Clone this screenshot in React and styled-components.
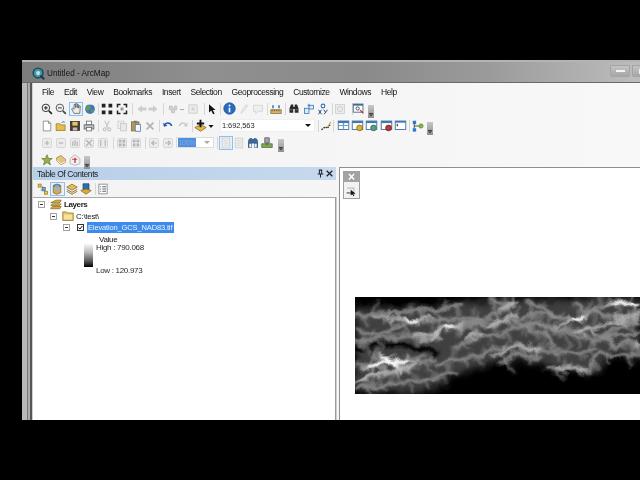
import React from "react";
import styled, { createGlobalStyle } from "styled-components";

const GlobalStyle = createGlobalStyle`
  html, body { margin: 0; padding: 0; background: #000; }
  body { width: 640px; height: 480px; overflow: hidden; font-family: "Liberation Sans", Arial, sans-serif; }
`;

const Page = styled.div`
  width: 640px;
  height: 480px;
  padding: 60px 0 60px 22px;
  box-sizing: border-box;
  overflow: hidden;
  background: #000;
`;

const Window = styled.div`
  width: 618px;
  height: 360px;
  display: flex;
  flex-direction: column;
  overflow: hidden;
  filter: blur(0.35px);
`;

const TitleBar = styled.div`
  height: 23px;
  flex: none;
  display: flex;
  align-items: center;
  box-sizing: border-box;
  padding: 2px 0 0 10px;
  gap: 2px;
  border-top: 2px solid #b4b4b4;
  border-bottom: 1px solid #6a6a6a;
  background: linear-gradient(90deg, #7c7c7c 0%, #8f8f8f 30%, #8a8a8a 55%, #9a9a9a 75%, #bdbdbd 100%);
`;

const TitleText = styled.span`
  font-size: 8.2px;
  color: #141414;
`;

const WinButtons = styled.div`
  margin-left: auto;
  margin-right: -12px;
  display: flex;
  gap: 2px;
  align-self: flex-start;
  margin-top: 1px;
`;

const WinButton = styled.div`
  width: 20px;
  height: 12px;
  display: flex;
  align-items: center;
  justify-content: center;
  background: linear-gradient(#c4c4c4, #a6a6a6);
  border: 1px solid #a4a4a4;
  box-sizing: border-box;
  border-radius: 0 0 2px 2px;
`;

const WinGlyph = styled.div`
  width: ${(p) => (p.$max ? "7px" : "9px")};
  height: ${(p) => (p.$max ? "5px" : "2px")};
  box-sizing: border-box;
  background: ${(p) => (p.$max ? "transparent" : "#f4f4f4")};
  border: ${(p) => (p.$max ? "1px solid #f0f0f0" : "none")};
`;

const Body = styled.div`
  flex: 1;
  min-height: 0;
  display: flex;
`;

const SideChrome = styled.div`
  width: 11px;
  flex: none;
  background: linear-gradient(90deg, #b9b9b9 0 5px, #777 5px 6px, #adadad 6px 8px, #565656 8px 10px, #cfcfcf 10px 11px);
`;

const Client = styled.div`
  flex: 1;
  min-width: 0;
  display: flex;
  flex-direction: column;
  background: linear-gradient(90deg, #f3f3f3, #f8f8f8);
`;

const MenuBar = styled.div`
  height: 17px;
  flex: none;
  display: flex;
  align-items: center;
  gap: 9.9px;
  padding-left: 9px;
  font-size: 8.5px;
  letter-spacing: -0.42px;
  color: #141414;
`;

const ToolRow = styled.div`
  height: 17px;
  flex: none;
  display: flex;
  align-items: center;
`;

const Slot = styled.div`
  flex: none;
  width: ${(p) => p.$w || 14}px;
  height: 14px;
  margin-left: ${(p) => p.$ml || 0}px;
  display: flex;
  align-items: center;
  justify-content: center;
  box-sizing: border-box;
  border: ${(p) => (p.$on ? "1px solid #8fc0ec" : "none")};
  background: ${(p) => (p.$on ? "#e6f1fb" : "transparent")};
  svg { display: block; flex: none; }
`;

const Sep = styled.div`
  flex: none;
  width: 1px;
  height: 12px;
  margin-left: ${(p) => p.$ml || 0}px;
  background: #d6d6d6;
`;

const Grip = styled.div`
  flex: none;
  width: 6px;
  height: 13px;
  margin-left: ${(p) => p.$ml || 0}px;
  margin-top: 6px;
  background: linear-gradient(#c8c8c8, #8f8f8f);
  position: relative;
  &::after {
    content: "";
    position: absolute;
    left: 1px;
    bottom: 2px;
    width: 4px;
    height: 3px;
    background: #222;
    clip-path: polygon(0 0, 100% 0, 100% 25%, 0 25%, 0 50%, 100% 50%, 50% 100%, 0 50%);
  }
`;

const Combo = styled.div`
  flex: none;
  width: ${(p) => p.$w}px;
  height: ${(p) => p.$h}px;
  margin-left: ${(p) => p.$ml || 0}px;
  box-sizing: border-box;
  display: flex;
  align-items: center;
  background: #fff;
  border: 1px solid ${(p) => (p.$off ? "#dcdcdc" : "#efefef")};
  font-size: 7.5px;
  letter-spacing: -0.1px;
  color: #2a2a2a;
  padding-left: 1px;
`;

const ComboArrow = styled.div`
  margin-left: auto;
  margin-right: 3px;
  width: 0;
  height: 0;
  border-left: 3px solid transparent;
  border-right: 3px solid transparent;
  border-top: 3px solid ${(p) => (p.$off ? "#aaa" : "#111")};
`;

const ComboValue = styled.span`
  background: #4f8fe0;
  color: #7ea9dd;
  width: 18px;
  height: 9px;
  font-size: 7px;
  line-height: 9px;
  text-align: center;
`;

const Dock = styled.div`
  flex: 1;
  min-height: 0;
  display: flex;
  gap: 3px;
  margin-top: -1px;
`;

const TocPanel = styled.div`
  width: 303px;
  flex: none;
  display: flex;
  flex-direction: column;
`;

const TocHeader = styled.div`
  height: 13px;
  flex: none;
  display: flex;
  align-items: center;
  padding: 0 2px 0 4px;
  background: linear-gradient(90deg, #b8cfe8, #c6d9ee);
  font-size: 8.5px;
  letter-spacing: -0.42px;
  color: #1c1c1c;
`;

const TocTitle = styled.span`
  margin-right: auto;
`;

const Tree = styled.div`
  flex: 1;
  background: #fff;
  border-top: 1px solid #a9a9a9;
  border-right: 1px solid #9a9a9a;
  box-shadow: 1px 0 0 #d0d0d0;
  padding-top: 1px;
  font-size: 8px;
  letter-spacing: -0.3px;
  color: #1c1c1c;
`;

const TreeRow = styled.div`
  height: 11.5px;
  display: flex;
  align-items: center;
  gap: ${(p) => p.$gap || 0}px;
  padding-left: ${(p) => p.$indent}px;
`;

const Expander = styled.div`
  width: 7px;
  height: 7px;
  flex: none;
  box-sizing: border-box;
  border: 1px solid #a4a4a4;
  background: #fff;
  position: relative;
  margin-right: ${(p) => p.$mr}px;
  &::after {
    content: "";
    position: absolute;
    left: 1px;
    top: 2px;
    width: 3px;
    height: 1px;
    background: #333;
  }
`;

const Check = styled.div`
  width: 7px;
  height: 7px;
  flex: none;
  box-sizing: border-box;
  border: 1px solid #333;
  margin-right: 3px;
  background: #fff;
  display: flex;
  align-items: center;
  justify-content: center;
`;

const LayerName = styled.span`
  background: #3d8ceb;
  color: #eaf3ff;
  height: 11px;
  line-height: 11px;
  padding: 0 1px;
  width: 85px;
  font-size: 7.5px;
  letter-spacing: -0.14px;
  white-space: nowrap;
`;

const Bold = styled.b`
  font-weight: bold;
  letter-spacing: -0.4px;
`;

const Legend = styled.div`
  display: flex;
  padding-left: 51px;
  gap: 3px;
  margin-top: -1px;
`;

const Ramp = styled.div`
  width: 9px;
  height: 23px;
  flex: none;
  background: linear-gradient(#f7f7f7, #bbb 35%, #555 75%, #000);
`;

const LegendLabels = styled.div`
  height: 32px;
  margin-top: -1px;
  display: flex;
  flex-direction: column;
  justify-content: space-between;
  color: #2a2a2a;
`;

const MapFrame = styled.div`
  flex: 1;
  min-width: 0;
  background: #fff;
  border-top: 1px solid #8f8f8f;
  border-left: 1px solid #8f8f8f;
  position: relative;
  overflow: hidden;
`;

const Raster = styled.svg`
  display: block;
  margin: 129px 0 0 15px;
`;

const FloatBox = styled.div`
  position: absolute;
  left: 3px;
  top: 3px;
  width: 17px;
  height: 28px;
  box-sizing: border-box;
  border: 1px solid #a0a0a0;
  background: #f2f2f2;
`;

const FloatHead = styled.div`
  height: 10px;
  background: #a3a3a3;
  display: flex;
  align-items: center;
  justify-content: center;
  color: #fff;
  font-size: 12px;
  font-weight: bold;
  line-height: 10px;
`;

const FloatBody = styled.div`
  height: 16px;
  display: flex;
  align-items: center;
  justify-content: center;
`;

const I = ({ children, s = 12 }) => (
  <svg width={s} height={s} viewBox="0 0 16 16">{children}</svg>
);

const grayGrid = (d) => (
  <I>
    <rect x="2" y="2" width="12" height="12" rx="1.5" fill="#ececec" stroke="#cfcfcf" />
    <path d={d} stroke="#b4b4b4" strokeWidth="1.6" fill="none" />
  </I>
);

const winIcon = (accent, accent2) => (
  <I s={13}>
    <rect x="1.5" y="2.5" width="13" height="10.5" fill="#fff" stroke="#2f5f93" />
    <rect x="1.5" y="2.5" width="13" height="2.5" fill="#3b78b8" />
    <circle cx="10.5" cy="11" r="3.5" fill={accent} stroke={accent2} />
  </I>
);

const icons = {
  zoomIn: (
    <I>
      <circle cx="6.5" cy="6.5" r="5" fill="#eef3f8" stroke="#333" strokeWidth="1.3" />
      <path d="M4 6.5h5M6.5 4v5" stroke="#111" strokeWidth="1.2" />
      <path d="M10.5 10.5l4 4" stroke="#222" strokeWidth="2.2" />
    </I>
  ),
  zoomOut: (
    <I>
      <circle cx="6.5" cy="6.5" r="5" fill="#eef3f8" stroke="#555" strokeWidth="1.3" />
      <path d="M4 6.5h5" stroke="#222" strokeWidth="1.2" />
      <path d="M10.5 10.5l4 4" stroke="#444" strokeWidth="2.2" />
    </I>
  ),
  hand: (
    <I s={13}>
      <path d="M5 14L2 8.5l1.2-1L5 9V3.2l1.3-.4L7 7V2l1.4-.2L9 7V2.8l1.3.2.3 4.6.9-3 1.2.5L12 14z" fill="#ececec" stroke="#555" strokeWidth="0.9" />
    </I>
  ),
  globe: (
    <I>
      <circle cx="8" cy="8" r="6.5" fill="#3f78b8" />
      <path d="M4 4c3-2 5 0 5 2s-3 2-3 4-3 0-3-2 0-3 1-4zM10 9c2-1 3 0 3 1s-2 3-3 2 0-2 0-3z" fill="#6f9a4a" />
      <path d="M5 2.6c2-1 4-1 6 0" stroke="#cfe2f5" fill="none" />
    </I>
  ),
  fixedIn: (
    <I>
      <path d="M1 1h5v5H1zM10 1h5v5h-5zM1 10h5v5H1zM10 10h5v5h-5z" fill="#222" />
    </I>
  ),
  fixedOut: (
    <I>
      <path d="M1 1h5v2H3v3H1zM10 1h5v5h-2V3h-3zM1 10h2v3h3v2H1zM13 10h2v5h-5v-2h3z" fill="#222" />
      <path d="M6 6h4v4H6z" fill="#999" />
    </I>
  ),
  back: (<I><path d="M2 8l6-5v3h6v4H8v3z" fill="#cdcdcd" /></I>),
  forward: (<I><path d="M14 8L8 3v3H2v4h6v3z" fill="#cdcdcd" /></I>),
  selGray: (<I><path d="M3 4h4v3h3V4h3v5h-3v4H6V9H3z" fill="#d2d2d2" stroke="#bbb" /></I>),
  caretGray: (<I s={8}><path d="M4 9h8" stroke="#aaa" strokeWidth="2" /></I>),
  clearGray: (<I><rect x="2.5" y="2.5" width="11" height="11" fill="#ededed" stroke="#c4c4c4" /><path d="M6 6h4v4H6z" fill="#d2d2d2" /></I>),
  arrow: (<I><path d="M4 1.5v11l3-2.5 2.5 5 2-1-2.5-4.8h3.7z" fill="#111" /></I>),
  info: (
    <I s={13}>
      <circle cx="8" cy="8" r="7" fill="#2c6cc0" stroke="#1c4f98" />
      <path d="M8 3.5v2M8 7v5.5" stroke="#fff" strokeWidth="2" />
    </I>
  ),
  pencilGray: (<I><path d="M4 14l1-4 6-8 2 1.5-6 8z" fill="#e6e6e6" stroke="#d4d4d4" /></I>),
  noteGray: (<I><path d="M2 3h12v8H8l-3 3v-3H2z" fill="#efefef" stroke="#cdcdcd" /></I>),
  measure: (
    <I>
      <path d="M1 9h14v5H1z" fill="#d9b26a" stroke="#8a6a30" />
      <path d="M3 9v2M6 9v2M9 9v2M12 9v2" stroke="#5a4520" />
      <path d="M4 3v4M12 3v4" stroke="#2a70c0" strokeWidth="2" />
    </I>
  ),
  binoculars: (
    <I>
      <path d="M2 13V7l2-5h3v3h2V2h3l2 5v6H9V8H7v5z" fill="#2a2a2a" />
      <path d="M3 9h3M10 9h3" stroke="#888" />
    </I>
  ),
  gotoXY: (
    <I>
      <rect x="2" y="7" width="6" height="7" fill="#dbe9f7" stroke="#2f6fb5" />
      <rect x="8" y="3" width="6" height="5" fill="#dbe9f7" stroke="#2f6fb5" />
      <path d="M6 3h3M8 1v4" stroke="#2f6fb5" />
    </I>
  ),
  xy: (
    <I>
      <circle cx="8" cy="4" r="2.5" fill="none" stroke="#2f6fb5" strokeWidth="1.4" />
      <path d="M2 9l4 6M6 9l-4 6M9 9l2.5 3.5M14 9l-4.5 6" stroke="#1d4d8a" strokeWidth="1.3" />
    </I>
  ),
  clockGray: (<I><rect x="2" y="2" width="12" height="12" fill="#ececec" stroke="#cbcbcb" /><circle cx="8" cy="8" r="3.5" fill="none" stroke="#c6c6c6" /></I>),
  viewer: (
    <I s={13}>
      <rect x="1.5" y="2.5" width="12" height="10" fill="#fff" stroke="#33587f" />
      <rect x="1.5" y="2.5" width="12" height="2" fill="#46688c" />
      <circle cx="7" cy="8" r="2" fill="none" stroke="#333" />
      <path d="M10 10l4 4" stroke="#a33" strokeWidth="1.5" />
    </I>
  ),
  newDoc: (<I><path d="M3 1.5h7l3 3v10H3z" fill="#fff" stroke="#777" /><path d="M10 1.5v3h3" fill="none" stroke="#777" /></I>),
  open: (
    <I>
      <path d="M1.5 5h5l1 1.5h6V14h-12z" fill="#e8bc4c" stroke="#9c7a25" />
      <path d="M9 4c1-2 3-2 4-1" stroke="#2a70c0" strokeWidth="1.3" fill="none" />
    </I>
  ),
  save: (
    <I>
      <rect x="2" y="2" width="12" height="12" fill="#4a4030" stroke="#2d2618" />
      <rect x="4.5" y="2.5" width="7" height="5" fill="#e5c568" />
      <rect x="5" y="10" width="6" height="4" fill="#bbb" />
    </I>
  ),
  print: (
    <I>
      <rect x="4.5" y="1.5" width="7" height="5" fill="#fff" stroke="#666" />
      <rect x="1.5" y="6.5" width="13" height="5.5" fill="#bfc5cc" stroke="#555" />
      <rect x="4.5" y="10" width="7" height="4.5" fill="#fff" stroke="#666" />
    </I>
  ),
  cut: (<I><path d="M5 1l4 9M11 1L7 10" stroke="#c6c6c6" strokeWidth="1.5" /><circle cx="5" cy="12.5" r="2" fill="none" stroke="#c2c2c2" strokeWidth="1.4" /><circle cx="11" cy="12.5" r="2" fill="none" stroke="#c2c2c2" strokeWidth="1.4" /></I>),
  copy: (<I><rect x="2.5" y="1.5" width="8" height="10" fill="#eee" stroke="#cbcbcb" /><rect x="6" y="4.5" width="8" height="10" fill="#e8e8e8" stroke="#c4c4c4" /></I>),
  paste: (
    <I>
      <rect x="2" y="2.5" width="10" height="12" fill="#b89558" stroke="#7a6030" />
      <rect x="5" y="1" width="4" height="3" fill="#777" />
      <rect x="7" y="6" width="7" height="9" fill="#f4f7fb" stroke="#4a78a8" />
    </I>
  ),
  del: (<I><path d="M3.5 3.5l9 9M12.5 3.5l-9 9" stroke="#b4b4b4" strokeWidth="2.4" /></I>),
  undo: (<I><path d="M3 7c2-4 8-4 10 1" fill="none" stroke="#1f58a8" strokeWidth="2" /><path d="M1.5 3.5L2.5 9l5-1.5z" fill="#1f58a8" /></I>),
  redo: (<I><path d="M13 7c-2-4-8-4-10 1" fill="none" stroke="#cbcbcb" strokeWidth="2" /><path d="M14.5 3.5L13.5 9l-5-1.5z" fill="#cbcbcb" /></I>),
  addData: (
    <I s={13}>
      <path d="M8 7l7 3.5L8 15 1 10.5z" fill="#e5b64a" stroke="#8a6a20" />
      <path d="M8 1v9M3.5 5.5h9" stroke="#111" strokeWidth="2.3" />
    </I>
  ),
  caret: (<I s={8}><path d="M3 6h10l-5 6z" fill="#111" /></I>),
  editor: (
    <I>
      <path d="M2 13l5-4 3 2 4-6" stroke="#222" strokeDasharray="2 1.5" strokeWidth="1.8" fill="none" />
      <path d="M10 8l4-6 1 1-4 6z" fill="#d9a83c" />
    </I>
  ),
  attrTable: (
    <I s={13}>
      <rect x="1.5" y="2.5" width="13" height="10.5" fill="#fff" stroke="#2f5f93" />
      <rect x="1.5" y="2.5" width="13" height="2.5" fill="#3b78b8" />
      <path d="M2 8h12M8 5v8" stroke="#6b9bd0" strokeWidth="1.5" />
    </I>
  ),
  catalog: winIcon("#d9b233", "#8a6d10"),
  search: winIcon("#5aa06a", "#2c6f70"),
  toolbox: winIcon("#b83a33", "#7a1f1a"),
  python: (
    <I s={13}>
      <rect x="1.5" y="2.5" width="13" height="10.5" fill="#fff" stroke="#2f5f93" />
      <rect x="1.5" y="2.5" width="13" height="2" fill="#3b78b8" />
      <path d="M4 6v3" stroke="#111" strokeWidth="1.2" />
    </I>
  ),
  model: (
    <I>
      <rect x="1" y="1" width="4.5" height="4.5" fill="#2f78c8" />
      <rect x="1" y="11" width="4.5" height="4.5" fill="#2f78c8" />
      <circle cx="12" cy="8" r="2.8" fill="#7ebc45" stroke="#4d8420" />
      <path d="M3 5.5v5.5M3 8h6" stroke="#222" />
    </I>
  ),
  gZoomIn: grayGrid("M5 8h6M8 5v6"),
  gZoomOut: grayGrid("M5 8h6"),
  gHand: grayGrid("M5 12V6M8 12V4M11 12V6"),
  gExtent: grayGrid("M4 4l8 8M12 4l-8 8"),
  gPage: grayGrid("M5 4v8M11 4v8"),
  gFixed: grayGrid("M4.5 4.5h2v2h-2zM9.5 4.5h2v2h-2zM4.5 9.5h2v2h-2zM9.5 9.5h2v2h-2z"),
  gBack: grayGrid("M12 8H5M8 5L5 8l3 3"),
  gFwd: grayGrid("M4 8h7M8 5l3 3-3 3"),
  gDoc: (<I><rect x="3" y="1.5" width="10" height="13" fill="#efefef" stroke="#c8c8c8" /><path d="M5 5h6M5 8h6M5 11h6" stroke="#cdcdcd" /></I>),
  focus: (
    <I>
      <path d="M2 14V6c0-5 5-5 6-2 1-3 6-3 6 2v8h-4V8H6v6z" fill="#3a6a9a" stroke="#25496f" />
      <rect x="3" y="9" width="3" height="5" fill="#e6edf4" />
      <rect x="10" y="9" width="3" height="5" fill="#e6edf4" />
    </I>
  ),
  dataDriven: (
    <I>
      <path d="M5 1h6v7H5z" fill="#9aa6ae" stroke="#555" />
      <path d="M1 9h14v5H1z" fill="#7fa55c" stroke="#4f6f30" />
      <path d="M8 8v3" stroke="#333" />
    </I>
  ),
  star: (<I><path d="M8 1l2 5h5l-4 3.2 1.6 5.3L8 11.3l-4.6 3.2L5 9.2 1 6h5z" fill="#96ad52" stroke="#66802f" /></I>),
  book: (<I><path d="M2 5l6-3 6 5v4l-6 3-6-5z" fill="#e3c47e" stroke="#a4843c" /><path d="M2 8l6 5 6-3" fill="none" stroke="#fff" /></I>),
  pin: (
    <I>
      <path d="M8 1l6.5 5v7L8 15l-6.500-2V6z" fill="#f4f0ee" stroke="#b3a7a5" />
      <path d="M8 5v7" stroke="#b02020" strokeWidth="1.5" />
      <path d="M4 7h7" stroke="#b02020" />
    </I>
  ),
  listDrawing: (
    <I>
      <path d="M3 3l5 2-3 5 5 1 3 3" fill="none" stroke="#aaa" />
      <rect x="1.500" y="1.500" width="4" height="4" fill="#e3c45a" stroke="#9a8020" />
      <rect x="7" y="6" width="4" height="4" fill="#7fa8d0" stroke="#3a6a9a" />
      <rect x="10" y="11" width="4" height="4" fill="#e3c45a" stroke="#9a8020" />
    </I>
  ),
  listSource: (
    <I>
      <path d="M3 3h10v10l-5 2-5-2z" fill="#d9a94a" stroke="#8a6a20" />
      <ellipse cx="8" cy="4" rx="4" ry="2.500" fill="#8fa0b0" stroke="#4c5c6c" />
      <rect x="4" y="5" width="8" height="5" fill="#a3b0bc" />
    </I>
  ),
  listVis: (
    <I>
      <path d="M8 1.500l7 4-7 4-7-4z" fill="#e3bc5e" stroke="#8a6a20" />
      <path d="M1 8.500l7 4 7-4" fill="none" stroke="#8a6a20" strokeWidth="1.200" />
      <path d="M1 11l7 4 7-4" fill="none" stroke="#8a6a20" strokeWidth="1.200" />
    </I>
  ),
  listSel: (
    <I>
      <path d="M4 1h8v8H4z" fill="#2a6fa8" stroke="#1d4d78" />
      <path d="M1 10l7-2 7 2-7 5z" fill="#e0a83a" stroke="#8a6a20" />
    </I>
  ),
  options: (
    <I>
      <rect x="2.500" y="1.500" width="11" height="13" fill="#fff" stroke="#777" />
      <path d="M7 5h5M7 8h5M7 11h5" stroke="#333" />
      <path d="M4 5h1.500M4 8h1.500M4 11h1.500" stroke="#2a6fa8" />
    </I>
  ),
  fullExtentTool: (
    <I s={13}>
      <path d="M3 5h8v8" fill="none" stroke="#4a7fb5" strokeDasharray="1.500 1" />
      <path d="M7 7v7l2-1.500 1.500 2.500 1-.6-1.400-2.400H13z" fill="#111" />
      <path d="M2 11h5" stroke="#111" />
    </I>
  ),
  pinTab: (
    <I s={9}>
      <path d="M5 2h6M6 2v6M10 2v6M3 9h10M8 9v6" stroke="#222" strokeWidth="1.800" fill="none" />
    </I>
  ),
  closeTab: (<I s={9}><path d="M3 3l10 10M13 3L3 13" stroke="#222" strokeWidth="2.200" /></I>),
  check: (<I s={7}><path d="M2 8l4 5 8-10" stroke="#111" strokeWidth="3.200" fill="none" /></I>),
  layers: (
    <I s={12}>
      <path d="M1 5l7-3.500h7L13 5z" fill="#d9aa44" stroke="#8a6a20" />
      <path d="M1 8.500l2-2h12l-2 2z" fill="#e3bc5e" stroke="#8a6a20" />
      <path d="M1 12l2-2h12l-2 3H1z" fill="#d9aa44" stroke="#8a6a20" />
    </I>
  ),
  folder: (
    <I s={12}>
      <path d="M1 4V2.500h5L7.500 4H15v10H1z" fill="#e7c65f" stroke="#8f7523" />
      <path d="M2.500 6h11v6.500h-11z" fill="#f5e4a0" />
    </I>
  ),
  logo: (
    <I s={13}>
      <circle cx="7.500" cy="7.500" r="6" fill="#3e9aa8" stroke="#1e4e60" strokeWidth="2" />
      <circle cx="7.500" cy="7.500" r="2.500" fill="#c9dde0" />
      <path d="M10.500 10.500l4.500 4.500" stroke="#153a48" strokeWidth="2.500" />
    </I>
  ),
};

// x = centre of the icon in page pixels, turned into margins so the row stays in flow
const buildRow = (items, start = 33) => {
  let cursor = start;
  return items.map((item, idx) => {
    const { x, kind = "icon", w = kind === "sep" ? 1 : kind === "grip" ? 6 : 14 } = item;
    const ml = x - w / 2 - cursor;
    cursor = x + w / 2;
    if (kind === "sep") return <Sep key={idx} $ml={ml} />;
    if (kind === "grip") return <Grip key={idx} $ml={ml} />;
    if (kind === "combo")
      return (
        <Combo key={idx} $ml={ml} $w={w} $h={item.h} $off={item.off}>
          {item.text}
          {item.value && <ComboValue>{item.value}</ComboValue>}
          <ComboArrow $off={item.off} />
        </Combo>
      );
    return (
      <Slot key={idx} $ml={ml} $w={w} $on={item.on}>
        {icons[item.i]}
      </Slot>
    );
  });
};

const sep = (x) => ({ kind: "sep", x });

const row1 = [
  { i: "zoomIn", x: 47 }, { i: "zoomOut", x: 61 }, { i: "hand", x: 76, on: true }, { i: "globe", x: 90 },
  sep(98), { i: "fixedIn", x: 107 }, { i: "fixedOut", x: 122 }, sep(132),
  { i: "back", x: 142, w: 10 }, { i: "forward", x: 153, w: 10 }, sep(163),
  { i: "selGray", x: 173 }, { i: "caretGray", x: 182, w: 8 }, { i: "clearGray", x: 193 }, sep(204),
  { i: "arrow", x: 212 }, sep(220), { i: "info", x: 229, w: 15 }, { i: "pencilGray", x: 244 }, { i: "noteGray", x: 258 }, sep(267),
  { i: "measure", x: 276 }, sep(285), { i: "binoculars", x: 294 }, { i: "gotoXY", x: 309 }, { i: "xy", x: 323 }, sep(332),
  { i: "clockGray", x: 340 }, sep(352), { i: "viewer", x: 358 }, { kind: "grip", x: 371 },
];

const row2 = [
  { i: "newDoc", x: 47 }, { i: "open", x: 61 }, { i: "save", x: 75 }, { i: "print", x: 89 }, sep(98),
  { i: "cut", x: 107 }, { i: "copy", x: 122 }, { i: "paste", x: 136 }, { i: "del", x: 150 }, sep(159),
  { i: "undo", x: 168 }, { i: "redo", x: 183 }, sep(192), { i: "addData", x: 200, w: 15 }, { i: "caret", x: 211, w: 8 },
  { kind: "combo", x: 267.5, w: 95, h: 13, text: "1:692,563" }, sep(318), { i: "editor", x: 326 }, sep(333),
  { i: "attrTable", x: 343, w: 15 }, { i: "catalog", x: 357, w: 15 }, { i: "search", x: 371, w: 15 }, { i: "toolbox", x: 386, w: 15 }, { i: "python", x: 400, w: 15 }, sep(409),
  { i: "model", x: 418 }, { kind: "grip", x: 430 },
];

const row3 = [
  { i: "gZoomIn", x: 47 }, { i: "gZoomOut", x: 61 }, { i: "gHand", x: 75 }, { i: "gExtent", x: 89 }, { i: "gPage", x: 103 }, sep(113),
  { i: "gFixed", x: 122 }, { i: "gFixed", x: 136 }, sep(145), { i: "gBack", x: 154 }, { i: "gFwd", x: 168 },
  { kind: "combo", x: 195, w: 38, h: 11, value: "100%", off: true }, sep(217),
  { i: "gDoc", x: 226, on: true }, { i: "gDoc", x: 239 }, { i: "focus", x: 253 }, { i: "dataDriven", x: 267 }, { kind: "grip", x: 281 },
];

const row4 = [
  { i: "star", x: 47 }, { i: "book", x: 61 }, { i: "pin", x: 75 }, { kind: "grip", x: 87 },
];

const tocRow = [
  { i: "listDrawing", x: 43 }, { i: "listSource", x: 57, on: true, w: 15 }, { i: "listVis", x: 72 }, { i: "listSel", x: 86 }, sep(95), { i: "options", x: 103 },
];

const menu = ["File", "Edit", "View", "Bookmarks", "Insert", "Selection", "Geoprocessing", "Customize", "Windows", "Help"];

// side branches along a ridge line, so it reads as a drainage pattern and not as a stroke
const spurs = (list, step, len) =>
  list.map((d, r) => {
    const n = d.match(/[\d.]+/g).map(Number);
    let out = "";
    for (let i = 0; i + 3 < n.length; i += 2) {
      const dx = n[i + 2] - n[i];
      const dy = n[i + 3] - n[i + 1];
      const seg = Math.hypot(dx, dy);
      const count = Math.floor(seg / step);
      for (let k = 1; k <= count; k++) {
        const t = k / (count + 1);
        const px = n[i] + dx * t;
        const py = n[i + 1] + dy * t;
        const side = k % 2 ? 1 : -1;
        const l = len * (0.6 + ((k * 7 + i * 3 + r) % 5) / 5);
        const qx = px + (-dy / seg) * side * l + (dx / seg) * l * 0.4;
        const qy = py + (dx / seg) * side * l + (dy / seg) * l * 0.4;
        out += `M${px.toFixed(1)} ${py.toFixed(1)}L${qx.toFixed(1)} ${qy.toFixed(1)}`;
      }
    }
    return out;
  });

const Ridges = ({ list, color, width, filter }) => (
  <g fill="none" stroke={color} strokeWidth={width} strokeLinecap="round" strokeLinejoin="round" filter={filter}>
    {list.map((d, i) => <path key={i} d={d} />)}
  </g>
);

const lowRidges = [
  "M45 90L150 85 260 75 370 60", "M45 130L120 150 200 110 290 105 420 100", "M45 170L130 160 210 150 260 155 320 125 420 110 520 60 450 45",
  "M250 165L320 130 365 130 430 120 600 90 700 105 810 55 900 60", "M350 190L420 150 470 150 600 110 640 140", "M290 240L390 215 450 195 540 180 620 200 700 205 770 190",
  "M640 145L740 130 790 150 900 90", "M620 255L700 240 745 262 780 205 830 215 900 205", "M800 160L830 190 860 165 900 195", "M45 290L140 270 230 240 290 222",
  "M45 240L150 232 250 215", "M45 312L180 292 350 268", "M560 50L620 80 660 100", "M700 60L780 90 900 110", "M600 120L680 150 780 160 900 140", "M520 110L620 150 640 190",
  "M100 210L200 250", "M470 240L540 210 600 215",
];

const highRidges = [
  "M100 95L200 105 280 95", "M270 160L330 125 370 118", "M380 160L400 145 420 150", "M440 120L530 90", "M450 215L530 185 600 195", "M650 135L700 100 745 90",
  "M800 60L860 50 900 65", "M700 140L790 120 900 85", "M60 250L150 232 230 230", "M120 205L160 232 190 262", "M60 285L150 262 220 240", "M230 150L300 140", "M650 250L740 250", "M880 170L900 190", "M480 70L530 50",
];

const peaks = ["M85 244L150 232 195 232", "M135 215L160 232 170 245", "M700 105L735 92", "M825 58L865 52 890 60", "M200 103L220 105", "M315 130L335 123"];

const Terrain = () => (
  <Raster width="285" height="97" viewBox="45 36 855 291" preserveAspectRatio="none">
    <defs>
      <filter id="rough" x="-10%" y="-30%" width="120%" height="160%" colorInterpolationFilters="sRGB">
        <feTurbulence type="fractalNoise" baseFrequency="0.02" numOctaves="3" seed="4" result="n" />
        <feDisplacementMap in="SourceGraphic" in2="n" scale="34" xChannelSelector="R" yChannelSelector="G" />
        <feGaussianBlur stdDeviation="1.5" />
      </filter>
      <filter id="b6" x="-20%" y="-20%" width="140%" height="140%"><feGaussianBlur stdDeviation="12" /></filter>
      <filter id="b3" x="-20%" y="-50%" width="140%" height="200%"><feGaussianBlur stdDeviation="4" /></filter>
      <filter id="b2" x="-20%" y="-50%" width="140%" height="200%"><feGaussianBlur stdDeviation="2.500" /></filter>
    </defs>
    <rect x="45" y="36" width="855" height="291" fill="#000" />
    <g filter="url(#rough)">
      <path d="M45 65L200 70 450 45 900 36V225L830 205 760 262 620 250 600 225 470 228 360 265 250 325H45z" fill="#404040" filter="url(#b6)" />
      <Ridges list={["M45 190L130 182 220 182 292 205", "M45 45L280 48"]} color="#060606" width="14" filter="url(#b3)" />
      <Ridges list={spurs(lowRidges, 28, 26)} color="#787878" width="7" filter="url(#b3)" />
      <Ridges list={lowRidges} color="#8e8e8e" width="10" filter="url(#b3)" />
      <Ridges list={spurs(highRidges, 22, 16)} color="#b4b4b4" width="4" filter="url(#b2)" />
      <Ridges list={highRidges} color="#c4c4c4" width="6" filter="url(#b2)" />
      <Ridges list={peaks} color="#fff" width="8" filter="url(#b2)" />
    </g>
  </Raster>
);

export default function App() {
  return (
    <Page>
      <GlobalStyle />
      <Window>
        <TitleBar>
          {icons.logo}
          <TitleText>Untitled - ArcMap</TitleText>
          <WinButtons>
            <WinButton><WinGlyph /></WinButton>
            <WinButton><WinGlyph $max /></WinButton>
          </WinButtons>
        </TitleBar>
        <Body>
          <SideChrome />
          <Client>
            <MenuBar>
              {menu.map((m) => <span key={m}>{m}</span>)}
            </MenuBar>
            <ToolRow>{buildRow(row1)}</ToolRow>
            <ToolRow>{buildRow(row2)}</ToolRow>
            <ToolRow>{buildRow(row3)}</ToolRow>
            <ToolRow>{buildRow(row4)}</ToolRow>
            <Dock>
              <TocPanel>
                <TocHeader>
                  <TocTitle>Table Of Contents</TocTitle>
                  {icons.pinTab}
                  {icons.closeTab}
                </TocHeader>
                <ToolRow>{buildRow(tocRow)}</ToolRow>
                <Tree>
                  <TreeRow $indent={5} $gap={2}>
                    <Expander $mr={3} />
                    {icons.layers}
                    <Bold>Layers</Bold>
                  </TreeRow>
                  <TreeRow $indent={17} $gap={2}>
                    <Expander $mr={3} />
                    {icons.folder}
                    <span>C:\test\</span>
                  </TreeRow>
                  <TreeRow $indent={30}>
                    <Expander $mr={7} />
                    <Check>{icons.check}</Check>
                    <LayerName>Elevation_GCS_NAD83.tif</LayerName>
                  </TreeRow>
                  <TreeRow $indent={66}>Value</TreeRow>
                  <Legend>
                    <Ramp />
                    <LegendLabels>
                      <span>High : 790.068</span>
                      <span>Low : 120.973</span>
                    </LegendLabels>
                  </Legend>
                </Tree>
              </TocPanel>
              <MapFrame>
                <FloatBox>
                  <FloatHead>×</FloatHead>
                  <FloatBody>{icons.fullExtentTool}</FloatBody>
                </FloatBox>
                <Terrain />
              </MapFrame>
            </Dock>
          </Client>
        </Body>
      </Window>
    </Page>
  );
}
